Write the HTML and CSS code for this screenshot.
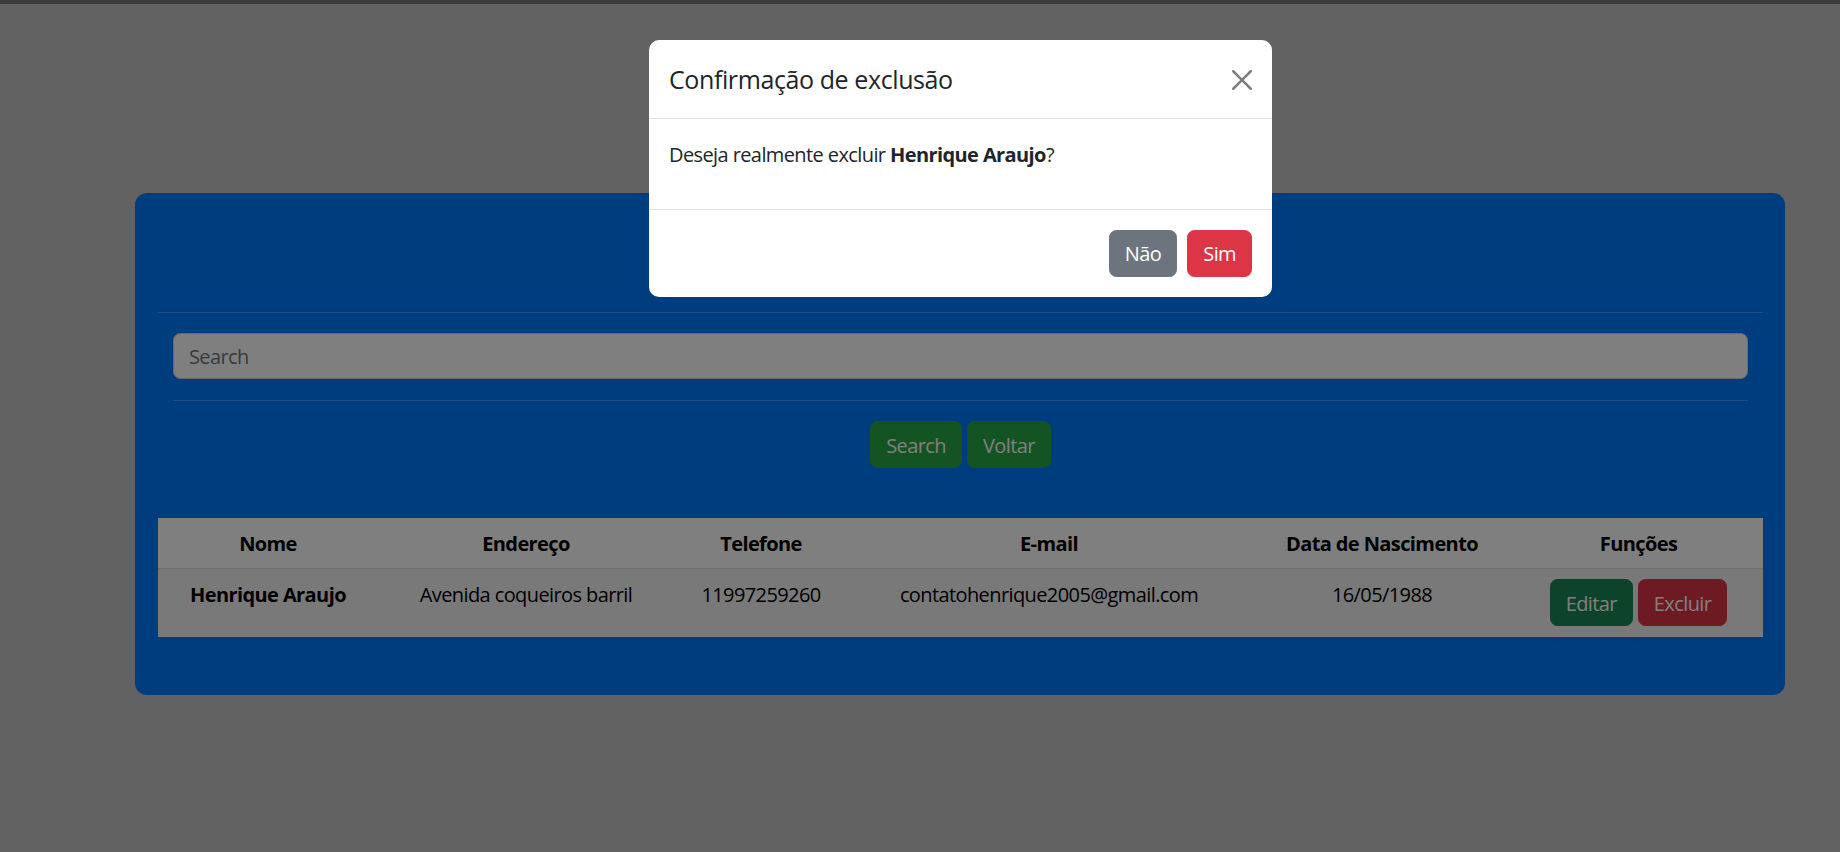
FILE: index.html
```html
<!DOCTYPE html>
<html lang="pt-BR">
<head>
<meta charset="utf-8">
<title>Clientes</title>
<link rel="stylesheet" href="styles.css">
</head>
<body>
<div class="topbar"></div>
<main class="page">
  <section class="card">
    <div class="card-head"></div>
    <hr class="rule">
    <div class="search-area">
      <input class="search-input" type="text" placeholder="Search">
      <hr class="rule rule-gap">
      <div class="actions">
        <button class="btn btn-green" type="button">Search</button>
        <button class="btn btn-green" type="button">Voltar</button>
      </div>
    </div>
    <table class="data">
      <colgroup>
        <col class="c-nome">
        <col class="c-end">
        <col class="c-tel">
        <col class="c-mail">
        <col class="c-data">
        <col class="c-func">
      </colgroup>
      <thead>
        <tr>
          <th>Nome</th>
          <th>Endereço</th>
          <th>Telefone</th>
          <th>E-mail</th>
          <th>Data de Nascimento</th>
          <th>Funções</th>
        </tr>
      </thead>
      <tbody>
        <tr>
          <th>Henrique Araujo</th>
          <td>Avenida coqueiros barril</td>
          <td>11997259260</td>
          <td>contatohenrique2005@gmail.com</td>
          <td>16/05/1988</td>
          <td>
            <div class="row-actions">
              <button class="btn btn-success" type="button">Editar</button>
              <button class="btn btn-danger" type="button">Excluir</button>
            </div>
          </td>
        </tr>
      </tbody>
    </table>
  </section>
</main>
<div class="backdrop"></div>
<div class="modal" role="dialog">
  <div class="modal-header">
    <h5 class="modal-title">Confirmação de exclusão</h5>
    <button class="btn-close" type="button" aria-label="Fechar">
      <svg viewBox="0 0 16 16" width="20" height="20"><path d="M.293.293a1 1 0 0 1 1.414 0L8 6.586 14.293.293a1 1 0 1 1 1.414 1.414L9.414 8l6.293 6.293a1 1 0 0 1-1.414 1.414L8 9.414l-6.293 6.293a1 1 0 0 1-1.414-1.414L6.586 8 .293 1.707a1 1 0 0 1 0-1.414z"/></svg>
    </button>
  </div>
  <div class="modal-body">
    <p>Deseja realmente excluir <strong>Henrique Araujo</strong>?</p>
  </div>
  <div class="modal-footer">
    <button class="btn btn-secondary" type="button">Não</button>
    <button class="btn btn-danger" type="button">Sim</button>
  </div>
</div>
</body>
</html>
```
FILE: styles.css
```css
* { box-sizing: border-box; }

html, body {
  margin: 0;
  height: 100%;
  overflow: hidden;
}

body {
  background: #c4c4c4;
  font-family: "Open Sans", "Noto Sans", sans-serif;
  font-size: 20px;
  line-height: 30px;
  letter-spacing: -0.6px;
  color: #212529;
}

.topbar {
  height: 4px;
  background: #787878;
}

.page {
  padding-top: 189px;
  padding-left: 135px;
}

.card {
  width: 1650px;
  background: #007bff;
  border-radius: 12px;
  padding: 0 22px 58px 23px;
}

.card-head {
  height: 119px;
}

.rule {
  margin: 0;
  border: 0;
  border-top: 1px solid rgba(255, 255, 255, 0.25);
}

.rule-gap {
  margin-top: 21px;
}

.search-area {
  padding: 20px 15px 0;
}

.search-input {
  display: block;
  width: 100%;
  height: 46px;
  padding: 1px 15px 0;
  font: inherit;
  letter-spacing: inherit;
  color: #212529;
  background: #fff;
  border: 1px solid #ced4da;
  border-radius: 7.5px;
  outline: none;
}

.search-input::placeholder {
  color: #6c757d;
}

.actions {
  display: flex;
  justify-content: center;
  gap: 5px;
  margin-top: 20px;
}

.btn {
  height: 47px;
  padding: 2px 15px 0;
  font: inherit;
  letter-spacing: inherit;
  line-height: 30px;
  color: #fff;
  border: 1px solid transparent;
  border-radius: 7.5px;
  cursor: pointer;
}

.btn-green { background: #28a745; border-color: #28a745; }
.btn-success { background: #198754; border-color: #198754; }
.btn-danger { background: #dc3545; border-color: #dc3545; }
.btn-secondary { background: #6c757d; border-color: #6c757d; }

.data {
  width: 100%;
  margin-top: 50px;
  border-collapse: collapse;
  table-layout: fixed;
  background: #fff;
  color: #000;
}

.c-nome { width: 220px; }
.c-end { width: 296px; }
.c-tel { width: 174px; }
.c-mail { width: 402px; }
.c-data { width: 264px; }
.c-func { width: 249px; }

.data th,
.data td {
  padding: 11px 10px 10px;
  text-align: center;
  vertical-align: top;
  white-space: nowrap;
}

.data thead th {
  padding: 11px 10px 9px;
  border-bottom: 1px solid #dee2e6;
}

.data th { font-weight: 700; }
.data td { font-weight: 400; }

.data tbody tr {
  background: #f2f2f2;
}

.data tbody td:last-child {
  padding-top: 10px;
  padding-bottom: 11px;
}

.row-actions {
  display: flex;
  justify-content: center;
  gap: 5px;
}

.backdrop {
  position: fixed;
  inset: 0;
  background: rgba(0, 0, 0, 0.5);
}

.modal {
  position: fixed;
  top: 40px;
  left: 649px;
  width: 623px;
  background: #fff;
  border-radius: 10px;
  color: #212529;
}

.modal-header {
  display: flex;
  align-items: center;
  padding: 21px 20px 19px;
  border-bottom: 1px solid #dee2e6;
}

.modal-title {
  margin: 0;
  font-size: 25px;
  font-weight: 500;
  line-height: 37.5px;
  letter-spacing: -0.4px;
}

.btn-close {
  margin-left: auto;
  width: 20px;
  height: 20px;
  padding: 0;
  border: 0;
  background: transparent;
  opacity: 0.5;
  display: flex;
}

.btn-close svg { fill: #000; }

.modal-body {
  padding: 21px 20px 19px;
}

.modal-body p {
  margin: 0 0 20px;
}

.modal-footer {
  display: flex;
  justify-content: flex-end;
  padding: 15px;
  border-top: 1px solid #dee2e6;
}

.modal-footer .btn {
  margin: 5px;
}
```
